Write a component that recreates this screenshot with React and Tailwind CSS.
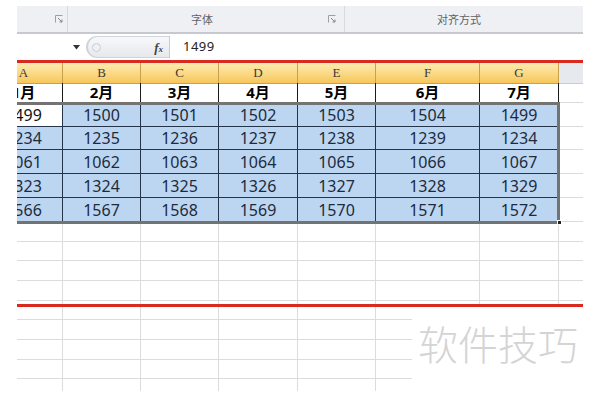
import React from "react";

const months = ["1月", "2月", "3月", "4月", "5月", "6月", "7月"];
const letters = ["A", "B", "C", "D", "E", "F", "G"];
const data = [
  [1499, 1500, 1501, 1502, 1503, 1504, 1499],
  [1234, 1235, 1236, 1237, 1238, 1239, 1234],
  [1061, 1062, 1063, 1064, 1065, 1066, 1067],
  [1323, 1324, 1325, 1326, 1327, 1328, 1329],
  [1566, 1567, 1568, 1569, 1570, 1571, 1572],
];
const dataHeights = ["h-[24px]", "h-[23px]", "h-[24px]", "h-[24px]", "h-[24px]"];
const emptyHeights = ["h-[20px]", "h-[19px]", "h-[20px]", "h-[20px]", "h-[19px]", "h-[20px]", "h-[20px]", "h-[19px]"];

const GRID = "grid grid-cols-[78px_78px_78px_79px_78px_104px_79px_60px]";

function Launcher() {
  return (
    <svg width="8" height="8" viewBox="0 0 8 8" className="shrink-0">
      <path d="M0.5 7.5V0.5H7.5" fill="none" stroke="#9aa0a8" strokeWidth="1" />
      <path d="M3 3L7 7M7 4.5V7H4.5" fill="none" stroke="#7f868f" strokeWidth="1" />
    </svg>
  );
}

export default function App() {
  return (
    <div
      className="w-[600px] h-[400px] bg-white relative overflow-hidden"
      style={{ fontFamily: '"Noto Sans", "Noto Sans CJK SC", sans-serif' }}
    >
      <div className="h-[6px]" />
      {/* Ribbon group labels */}
      <div className="ml-[17px] w-[566px] h-[28px] bg-[#eef0f3] border-b-2 border-[#c6cad0] flex text-[11px] text-[#5f6368]">
        <div className="w-[51px] flex items-center justify-end pr-[4px] border-r border-[#d6d9de]">
          <Launcher />
        </div>
        <div className="w-[277px] flex items-center border-r border-[#d6d9de] pr-[8px]">
          <span className="flex-1 text-center pl-[8px]" style={{ fontFamily: '"Noto Sans CJK SC", sans-serif' }}>字体</span>
          <Launcher />
        </div>
        <div className="flex-1 flex items-center justify-center pr-[10px]">
          <span style={{ fontFamily: '"Noto Sans CJK SC", sans-serif' }}>对齐方式</span>
        </div>
      </div>
      {/* Formula bar */}
      <div className="ml-[17px] w-[566px] h-[26px] flex items-center bg-white">
        <div className="w-[69px] h-full flex items-center justify-end pr-[6px]">
          <svg width="7" height="5" viewBox="0 0 7 5">
            <path d="M0 0H7L3.5 4.5Z" fill="#333" />
          </svg>
        </div>
        <div className="w-[83px] h-[22px] rounded-l-[11px] border-l-2 border-t border-b border-[#cfd3d8] bg-gradient-to-b from-[#f7f8fa] to-[#e6e9ed] flex items-center justify-between pl-[4px] pr-[6px]">
          <div className="w-[9px] h-[9px] rounded-full border border-[#c9cdd2] bg-[#eef0f3]" />
          <span
            className="text-[13px] italic font-bold text-[#444] leading-none"
            style={{ fontFamily: '"Liberation Serif", serif' }}
          >
            f<span className="text-[9px]">x</span>
          </span>
        </div>
        <div className="w-px h-[22px] bg-[#c9cdd2]" />
        <div className="flex-1 pl-[13px] text-[13px] text-[#222] tracking-[0.5px]">1499</div>
      </div>
      {/* Red highlight line */}
      <div className="ml-[17px] w-[566px] h-[3px] bg-[#d92a20]" />
      {/* Sheet */}
      <div className="ml-[17px] w-[566px] h-[329px] overflow-hidden">
        <div className="ml-[-32px] w-[634px]">
          {/* Column headers */}
          <div className={`${GRID} h-[20px]`}>
            {letters.map((l) => (
              <div
                key={l}
                className="bg-gradient-to-b from-[#fdedb0] to-[#f7c659] border-r border-b border-[#c9a14e] flex items-center justify-center text-[13px] text-[#3a3a3a]"
                style={{ fontFamily: '"Liberation Serif", serif' }}
              >
                {l}
              </div>
            ))}
            <div className="bg-[#e6e9ed] border-b border-[#c9ccd1]" />
          </div>
          {/* Row 1 */}
          <div className={`${GRID} h-[20px]`}>
            {months.map((m) => (
              <div
                key={m}
                className="border-r border-b border-[#1b1b1b] flex items-center justify-center text-[15px] font-bold text-black leading-none"
                style={{ fontFamily: '"Noto Sans", "Noto Sans CJK SC", sans-serif' }}
              >
                {m}
              </div>
            ))}
            <div className="border-b border-[#dadada]" />
          </div>
          {/* Data rows */}
          <div className="relative">
            {data.map((row, r) => (
              <div key={r} className={`${GRID} ${dataHeights[r]}`}>
                {row.map((v, c) => (
                  <div
                    key={c}
                    className={
                      r === 0 && c === 0
                        ? "bg-white border-r border-b border-[#24344a] flex items-center justify-center text-[16px] text-[#111] leading-none"
                        : "bg-[#bcd6f2] border-r border-b border-[#24344a] flex items-center justify-center text-[16px] text-[#1d2b3c] leading-none"
                    }
                  >
                    {v}
                  </div>
                ))}
                <div className="border-b border-[#dadada]" />
              </div>
            ))}
            <div className="absolute left-[-2px] top-[-1px] w-[577px] h-[122px] border-[3px] border-[#737373] pointer-events-none" />
            <div className="absolute left-[572px] top-[117px] w-[5px] h-[5px] bg-[#222] border border-white" />
          </div>
          {/* Empty rows */}
          {emptyHeights.map((h, r) => (
            <div key={r} className={`${GRID} ${h}`}>
              {letters.map((l) => (
                <div key={l} className="border-r border-b border-[#dcdcdc]" />
              ))}
              <div className="border-b border-[#dcdcdc]" />
            </div>
          ))}
          <div className={`${GRID} h-[12px]`}>
            {letters.map((l) => (
              <div key={l} className="border-r border-[#dcdcdc]" />
            ))}
            <div />
          </div>
        </div>
      </div>
      {/* Lower red highlight line */}
      <div className="absolute left-[17px] top-[304px] w-[566px] h-[3px] bg-[#d92a20]" />
      {/* Watermark */}
      <div className="absolute left-[412px] top-[307px] right-0 bottom-0 bg-white">
        <div
          className="absolute left-[6px] top-[16px] text-[40px] leading-none text-[#d4d4d4] tracking-[0px] whitespace-nowrap"
          style={{ fontFamily: '"Noto Sans CJK SC", sans-serif', fontWeight: 300 }}
        >
          软件技巧
        </div>
      </div>
    </div>
  );
}
